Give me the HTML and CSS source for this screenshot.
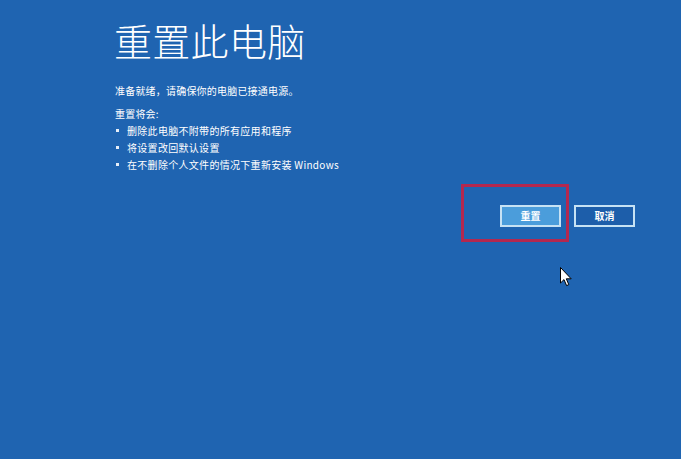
FILE: index.html
```html
<!DOCTYPE html>
<html lang="zh-CN">
<head>
<meta charset="utf-8">
<title>重置此电脑</title>
<link rel="stylesheet" href="styles.css">
</head>
<body>
<div class="screen">
  <main class="content">
    <h1 class="title">重置此电脑</h1>
    <p class="ready">准备就绪，请确保你的电脑已接通电源。</p>
    <p class="heading">重置将会:</p>
    <ul class="list">
      <li class="item"><span class="dot"></span>删除此电脑不附带的所有应用和程序</li>
      <li class="item"><span class="dot"></span>将设置改回默认设置</li>
      <li class="item"><span class="dot"></span>在不删除个人文件的情况下重新安装 Windows</li>
    </ul>
  </main>
  <div class="actions">
    <button class="btn btn-primary">重置</button>
    <button class="btn btn-secondary">取消</button>
  </div>
  <div class="highlight"></div>
  <svg class="cursor" width="13" height="20" viewBox="0 0 13 20">
    <path d="M0.5 0.5 L0.5 16 L4 12.6 L6.6 18.6 L8.8 17.6 L6.3 11.8 L11.2 11.8 Z" fill="#fff" stroke="#000" stroke-width="1"/>
  </svg>
</div>
</body>
</html>
```
FILE: styles.css
```css
html, body {
  margin: 0;
  padding: 0;
}
body {
  background: #1f64b1;
  font-family: "Noto Sans CJK SC", "Noto Sans", sans-serif;
  color: #fff;
}
.screen {
  position: relative;
  width: 681px;
  height: 459px;
  overflow: hidden;
  background: #1f64b1;
}
.content {
  padding: 17px 0 0 114px;
}
.title {
  margin: 0;
  font-size: 38px;
  line-height: 46px;
  font-weight: 300;
  letter-spacing: 0.3px;
}
.ready,
.heading {
  margin: 0;
  font-size: 10px;
  line-height: 17px;
  padding-left: 1px;
  letter-spacing: 0.2px;
}
.ready {
  margin-top: 19px;
}
.heading {
  margin-top: 6px;
}
.list {
  list-style: none;
  margin: 0;
  padding: 0;
}
.item {
  display: flex;
  align-items: center;
  font-size: 10px;
  line-height: 17px;
  padding-left: 2px;
  letter-spacing: 0.3px;
}
.dot {
  width: 3px;
  height: 3px;
  background: #e6eef8;
  margin-right: 8px;
  flex: none;
}
.actions {
  display: flex;
  justify-content: flex-end;
  gap: 13px;
  margin-top: 32px;
  padding-right: 46px;
}
.btn {
  width: 61px;
  height: 22px;
  box-sizing: border-box;
  border: 2px solid #c6e2f4;
  color: #fff;
  font-family: "Noto Sans CJK SC", sans-serif;
  font-size: 10px;
  font-weight: 700;
  padding: 0;
  line-height: 18px;
}
.btn-primary {
  background: #4b9ddb;
}
.btn-secondary {
  background: #1d5eaa;
}
.highlight {
  position: absolute;
  left: 461px;
  top: 184px;
  width: 108px;
  height: 58px;
  box-sizing: border-box;
  border: 3px solid #b3284f;
}
.cursor {
  position: absolute;
  left: 560px;
  top: 267px;
}
```
